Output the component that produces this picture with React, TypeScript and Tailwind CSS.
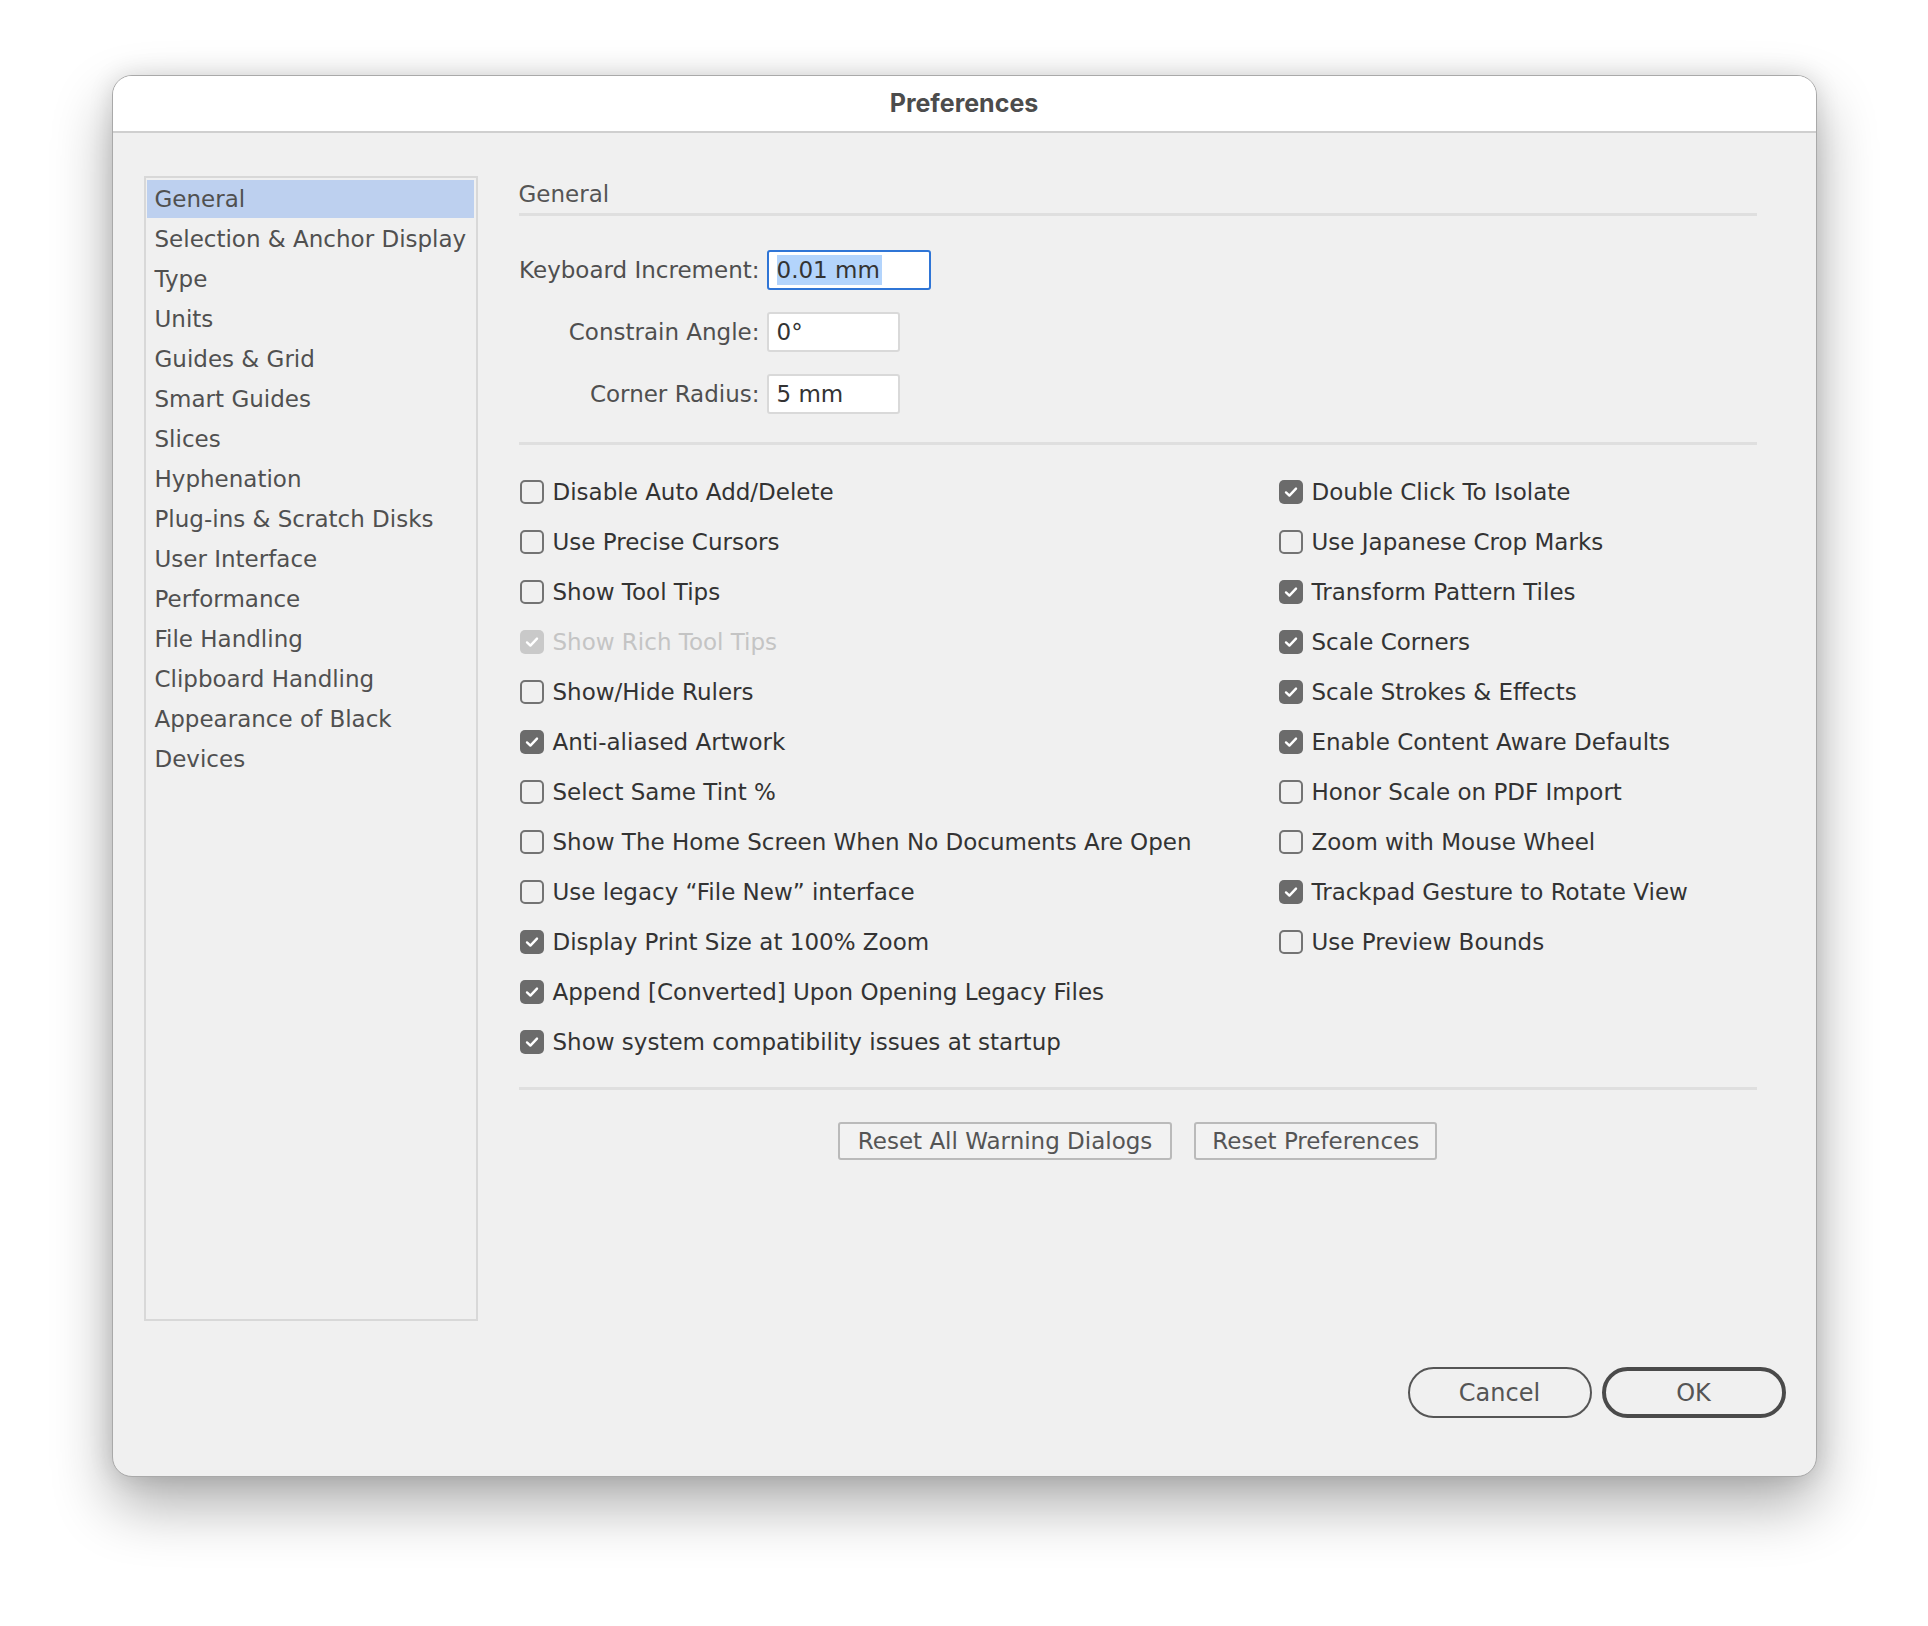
const sections = [
  'General',
  'Selection & Anchor Display',
  'Type',
  'Units',
  'Guides & Grid',
  'Smart Guides',
  'Slices',
  'Hyphenation',
  'Plug-ins & Scratch Disks',
  'User Interface',
  'Performance',
  'File Handling',
  'Clipboard Handling',
  'Appearance of Black',
  'Devices',
];

type Opt = { label: string; checked?: boolean; disabled?: boolean };

const leftOpts: Opt[] = [
  { label: 'Disable Auto Add/Delete' },
  { label: 'Use Precise Cursors' },
  { label: 'Show Tool Tips' },
  { label: 'Show Rich Tool Tips', checked: true, disabled: true },
  { label: 'Show/Hide Rulers' },
  { label: 'Anti-aliased Artwork', checked: true },
  { label: 'Select Same Tint %' },
  { label: 'Show The Home Screen When No Documents Are Open' },
  { label: 'Use legacy “File New” interface' },
  { label: 'Display Print Size at 100% Zoom', checked: true },
  { label: 'Append [Converted] Upon Opening Legacy Files', checked: true },
  { label: 'Show system compatibility issues at startup', checked: true },
];

const rightOpts: Opt[] = [
  { label: 'Double Click To Isolate', checked: true },
  { label: 'Use Japanese Crop Marks' },
  { label: 'Transform Pattern Tiles', checked: true },
  { label: 'Scale Corners', checked: true },
  { label: 'Scale Strokes & Effects', checked: true },
  { label: 'Enable Content Aware Defaults', checked: true },
  { label: 'Honor Scale on PDF Import' },
  { label: 'Zoom with Mouse Wheel' },
  { label: 'Trackpad Gesture to Rotate View', checked: true },
  { label: 'Use Preview Bounds' },
];

function Check({ label, checked, disabled }: Opt) {
  return (
    <div className="flex items-center h-[50px] gap-[9px] pl-[1px]">
      {checked ? (
        <span
          className={`w-[24px] h-[24px] rounded-[5px] flex items-center justify-center flex-shrink-0 ${
            disabled ? 'bg-[#c9c9c9]' : 'bg-[#6b6b6b]'
          }`}
        >
          <svg width="16" height="16" viewBox="0 0 16 16" fill="none">
            <path
              d="M3 8.4 L6.4 11.6 L13 4.6"
              stroke="white"
              strokeWidth="2.4"
              strokeLinecap="round"
              strokeLinejoin="round"
            />
          </svg>
        </span>
      ) : (
        <span className="w-[24px] h-[24px] rounded-[5px] border-2 border-[#737373] flex-shrink-0" />
      )}
      <span className={disabled ? 'text-[#c4c4c4]' : 'text-[#333333]'}>{label}</span>
    </div>
  );
}

function Field({ label, value, w, focused }: { label: string; value: string; w: string; focused?: boolean }) {
  return (
    <div className="flex items-center h-[40px] gap-[7px]">
      <span className="w-[241px] text-right text-[#4f4f4f]">{label}</span>
      <div
        className={`${w} h-[40px] bg-white rounded-[3px] border-2 flex items-center px-[8px] text-[#333333] ${
          focused ? 'border-[#2f75d6]' : 'border-[#d9d9d9]'
        }`}
      >
        {focused ? <span className="bg-[#b3d4fc] leading-[30px] pr-[2px]">{value}</span> : <span>{value}</span>}
      </div>
    </div>
  );
}

export default function App() {
  return (
    <div className="min-h-screen bg-white flex justify-center pt-[75px] font-['DejaVu_Sans',sans-serif] text-[23px]">
      <div className="w-[1705px] h-[1402px] bg-[#f0f0f0] rounded-[20px] border border-[#a9a9a9] shadow-[0_28px_60px_rgba(0,0,0,0.32),0_0_24px_rgba(0,0,0,0.12)] flex flex-col overflow-hidden">
        <div className="h-[57px] bg-white border-b-2 border-[#cfcfcf] flex items-center justify-center font-['Inter',sans-serif] font-bold text-[25px] text-[#4c4c4c]">
          Preferences
        </div>

        <div className="flex pl-[31px] pt-[43px] h-[1189px]">
          <div className="w-[334px] h-[1145px] border-2 border-[#d8d8d8] pt-[1px] px-[1px] text-[#505050]">
            {sections.map((s, i) => (
              <div
                key={s}
                className={`h-[40px] flex items-center px-[8px] ${i === 0 ? 'bg-[#bdd0ef] mr-[1px] border-y border-[#f0f0f0]' : ''}`}
              >
                {s}
              </div>
            ))}
          </div>

          <div className="ml-[41px] w-[1238px] flex flex-col">
            <div className="h-[37px] flex items-center text-[#555555]">General</div>
            <div className="h-[3px] bg-[#dfdfdf]" />

            <div className="mt-[34px] flex flex-col gap-[22px]">
              <Field label="Keyboard Increment:" value="0.01 mm" w="w-[164px]" focused />
              <Field label="Constrain Angle:" value="0°" w="w-[133px]" />
              <Field label="Corner Radius:" value="5 mm" w="w-[133px]" />
            </div>

            <div className="mt-[28px] h-[3px] bg-[#dfdfdf]" />

            <div className="mt-[22px] grid grid-cols-[759px_1fr]">
              <div className="flex flex-col">
                {leftOpts.map((o) => (
                  <Check key={o.label} {...o} />
                ))}
              </div>
              <div className="flex flex-col">
                {rightOpts.map((o) => (
                  <Check key={o.label} {...o} />
                ))}
              </div>
            </div>

            <div className="mt-[20px] h-[3px] bg-[#dfdfdf]" />

            <div className="mt-[32px] flex justify-center gap-[22px] text-[#555555]">
              <button className="h-[38px] px-[18px] border-2 border-[#bababa] rounded-[3px] bg-[#f2f2f2]">
                Reset All Warning Dialogs
              </button>
              <button className="h-[38px] px-[16px] border-2 border-[#bababa] rounded-[3px] bg-[#f2f2f2]">
                Reset Preferences
              </button>
            </div>
          </div>
        </div>

        <div className="mt-[45px] flex justify-end gap-[10px] pr-[30px] text-[24px] text-[#555555]">
          <button className="w-[184px] h-[51px] rounded-full border-2 border-[#555555]">Cancel</button>
          <button className="w-[184px] h-[51px] rounded-full border-4 border-[#4a4a4a]">OK</button>
        </div>
      </div>
    </div>
  );
}
